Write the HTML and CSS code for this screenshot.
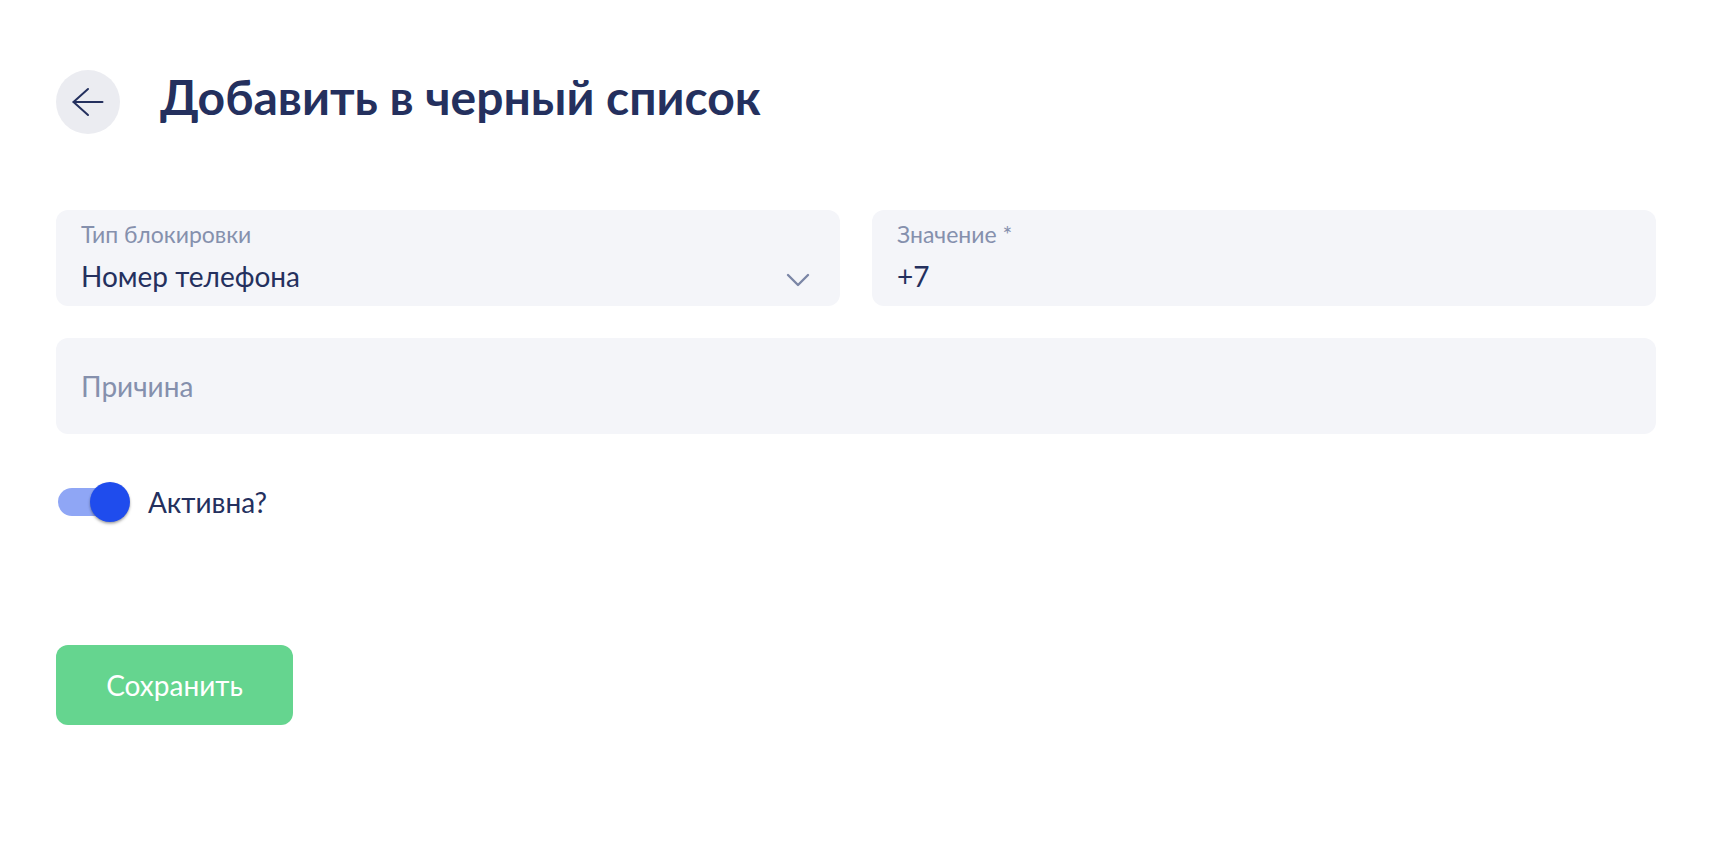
FILE: index.html
```html
<!DOCTYPE html>
<html lang="ru">
<head>
	<meta charset="UTF-8">
	<title>Добавить в черный список</title>
	<link rel="stylesheet" href="styles.css">
</head>
<body>
	<div class="page">
		<!-- заголовок -->
		<div class="page-head">
			<a class="back-btn" href="#">
				<svg width="32" height="32" viewBox="0 0 32 32" fill="none" stroke="#24305e" stroke-width="2" stroke-linecap="round" stroke-linejoin="round">
					<path d="M30.5 16H1.5"/>
					<path d="M16 3L1.5 16L16 29"/>
				</svg>
			</a>
			<h1 class="page-title">Добавить в черный список</h1>
		</div>

		<!-- форма -->
		<div class="form">
			<div class="form-row form-row-2">
				<div class="field field-select">
					<div class="field-label">Тип блокировки</div>
					<div class="field-value">Номер телефона</div>
					<svg class="field-chevron" width="24" height="14" viewBox="0 0 24 14" fill="none" stroke="#7b86a6" stroke-width="2.4" stroke-linecap="round" stroke-linejoin="round">
						<path d="M2 2L12 12L22 2"/>
					</svg>
				</div>
				<div class="field">
					<div class="field-label">Значение *</div>
					<div class="field-value">+7</div>
				</div>
			</div>
			<div class="form-row">
				<div class="field field-empty">
					<div class="field-placeholder">Причина</div>
				</div>
			</div>

			<label class="switch-row">
				<span class="switch">
					<span class="switch-track"></span>
					<span class="switch-thumb"></span>
				</span>
				<span class="switch-text">Активна?</span>
			</label>

			<a class="btn-save" href="#">Сохранить</a>
		</div>
	</div>
</body>
</html>
```

FILE: styles.css
```css
body {
	margin: 0;
	padding: 0;
	background: #fff;
	font-family: Lato, "Noto Sans", sans-serif;
	color: #24305e;
}

.page {
	padding: 70px 74px 0 56px;
}

/*заголовок*/
.page-head {
	display: flex;
	align-items: center;
	gap: 40px;
}
.back-btn {
	width: 64px;
	height: 64px;
	border-radius: 50%;
	background: #ebecf1;
	display: flex;
	align-items: center;
	justify-content: center;
	flex-shrink: 0;
}
.page-title {
	margin: -10px 0 0;
	font-size: 48px;
	font-weight: 700;
	line-height: 64px;
	color: #24305e;
}

/*форма*/
.form {
	margin-top: 76px;
}
.form-row {
	margin-bottom: 32px;
}
.form-row-2 {
	display: grid;
	grid-template-columns: 1fr 1fr;
	gap: 32px;
}
.field {
	position: relative;
	height: 96px;
	box-sizing: border-box;
	padding: 10px 25px 0;
	background: #f4f5f9;
	border-radius: 12px;
}
.field-label {
	font-size: 23px;
	line-height: 28px;
	color: #8590ad;
}
.field-value {
	margin-top: 11px;
	font-size: 28px;
	line-height: 34px;
	color: #24305e;
}
.field-chevron {
	position: absolute;
	right: 30px;
	top: 63px;
}
.field-empty {
	display: flex;
	align-items: center;
	padding-top: 0;
}
.field-placeholder {
	font-size: 28px;
	color: #8590ad;
}

/*переключатель*/
.switch-row {
	display: flex;
	align-items: center;
	gap: 18px;
	margin-top: 48px;
}
.switch {
	position: relative;
	width: 74px;
	height: 40px;
}
.switch-track {
	position: absolute;
	left: 2px;
	top: 6px;
	width: 68px;
	height: 28px;
	border-radius: 14px;
	background: #8fa6f5;
}
.switch-thumb {
	position: absolute;
	right: 0;
	top: 0;
	width: 40px;
	height: 40px;
	border-radius: 50%;
	background: #1f4ced;
	box-shadow: 0 2px 3px rgba(0, 0, 0, 0.25), 0 1px 2px rgba(0, 0, 0, 0.15);
}
.switch-text {
	font-size: 28px;
	color: #24305e;
}

/*кнопка*/
.btn-save {
	display: inline-block;
	margin-top: 123px;
	width: 237px;
	height: 80px;
	line-height: 80px;
	text-align: center;
	border-radius: 12px;
	background: #65d58f;
	color: #fff;
	font-size: 28px;
	text-decoration: none;
}
```
